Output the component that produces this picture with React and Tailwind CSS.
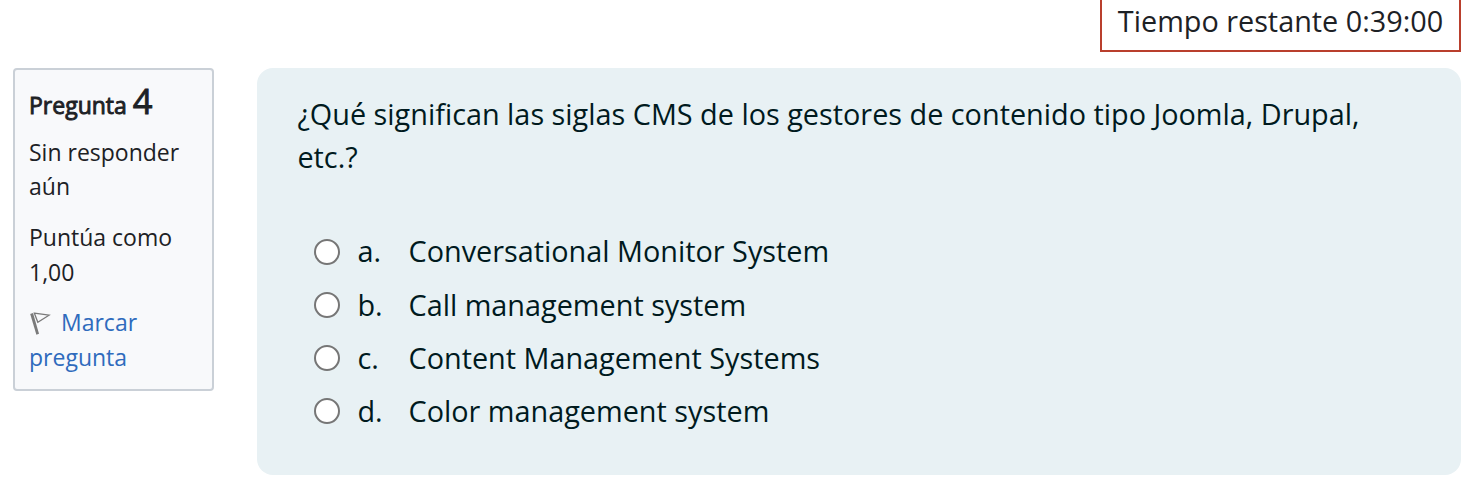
const options = [
  ['a.', 'Conversational Monitor System'],
  ['b.', 'Call management system'],
  ['c.', 'Content Management Systems'],
  ['d.', 'Color management system'],
];

function Flag() {
  return (
    <svg className="mr-[10px] inline-block h-[24px] w-[22px] align-[-4px]" viewBox="0 0 22 24" fill="none">
      <path d="M5.4 2.2 L20 4.2 L8.8 11.2 Z" stroke="#7a7a7a" strokeWidth="1.3" />
      <path d="M1.2 2.9 L4 1.9 L10 22.8 L7.4 23.7 Z" fill="#7a7a7a" />
    </svg>
  );
}

export default function App() {
  return (
    <div className="h-[490px] overflow-hidden bg-white pl-[13px] pr-[21px] font-['Open_Sans',sans-serif] text-[#1d2125]">
      <div className="flex h-[68px] items-start justify-end">
        <div className="flex h-[52px] w-[361px] items-start justify-center border-2 border-t-0 border-[#b93f2d] text-[28.8px] leading-[41px] whitespace-nowrap">
          Tiempo restante 0:39:00
        </div>
      </div>
      <div className="flex items-start">
        <aside className="h-[323px] w-[201px] shrink-0 rounded-[4px] border-2 border-[#cad0d7] bg-[#f8f9fb] px-[14px] pt-[9px] text-[23px] leading-[34.5px]">
          <h3 className="h-[56px] text-[23px] leading-[44px] font-normal whitespace-nowrap [-webkit-text-stroke:0.9px_#1d2125]">
            Pregunta <span className="text-[34.5px]">4</span>
          </h3>
          <div className="mb-[17px] leading-[34px]">Sin responder<br />aún</div>
          <div className="mb-[16px]">Puntúa como<br />1,00</div>
          <a className="block text-[#2f6bbd]"><Flag />Marcar<br />pregunta</a>
        </aside>
        <main className="ml-[43px] h-[407px] w-[1204px] rounded-[16px] bg-[#e8f1f4] pt-[24px] pl-[40.4px] text-[28.82px] leading-[43px] text-[#001a1e]">
          <p className="whitespace-nowrap">¿Qué significan las siglas CMS de los gestores de contenido tipo Joomla, Drupal,<br />etc.?</p>
          <div className="mt-[48px] ml-[16.6px]">
            {options.map(([letter, text]) => (
              <label key={letter} className="group flex h-[53px] items-start whitespace-nowrap">
                <span className="mt-[13px] mr-[17.5px] size-[26px] rounded-full border-2 border-[#767676] bg-white" />
                <span className="flex pt-[4px] group-first:pt-[3px]">
                  <span className="w-[51px]">{letter}</span>
                  <span>{text}</span>
                </span>
              </label>
            ))}
          </div>
        </main>
      </div>
    </div>
  );
}
